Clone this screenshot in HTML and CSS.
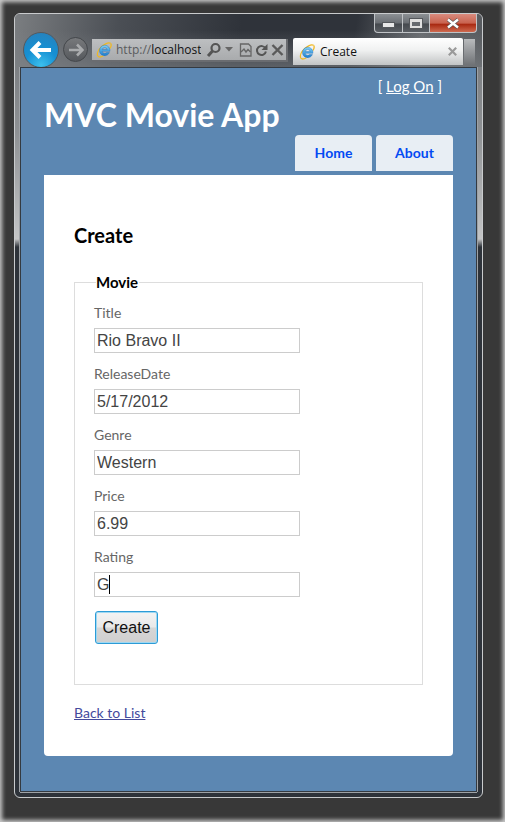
FILE: index.html
```html
<!DOCTYPE html>
<html lang="en">
<head>
<meta charset="utf-8">
<title>Create</title>
<link rel="stylesheet" href="styles.css">
</head>
<body>
<svg class="defs" width="0" height="0" aria-hidden="true">
  <defs>
    <linearGradient id="ieblue" x1="0" y1="0" x2="0" y2="1">
      <stop offset="0" stop-color="#7fd0f5"/>
      <stop offset="1" stop-color="#1c7fd0"/>
    </linearGradient>
    <symbol id="ie" viewBox="0 0 16 16">
      <path d="M14.6 1.3C12.8.2 9 1.8 5.6 4.8 2.6 7.500.6 11.500 1.800 14c1 1.500 3.600.9 5.600-.3" fill="none" stroke="#f0b820" stroke-width="1.300"/>
      <path d="M14.600 1.300c1 1.200.4 3.400-.6 5.200" fill="none" stroke="#f0b820" stroke-width="1.300"/>
      <path d="M8.700 3.200a5.200 5.200 0 0 0-5.200 5.200 5.200 5.200 0 0 0 9.900 2.200h-2.900a2.700 2.700 0 0 1-4.400-1.300h7.800A5.200 5.200 0 0 0 8.700 3.200Zm-2.500 4.300a2.600 2.600 0 0 1 5 0Z" fill="url(#ieblue)" stroke="#1668b8" stroke-width=".4"/>
    </symbol>
  </defs>
</svg>
<div class="desk">
  <div class="window">
    <div class="chrome">
      <div class="caption">
        <div class="cap cap-min"><span class="min-glyph"></span></div>
        <div class="cap cap-max"><span class="max-glyph"></span></div>
        <div class="cap cap-close">
          <svg width="14" height="11" viewBox="0 0 14 11"><path d="M2 1.500 12 9.500M12 1.500 2 9.500" stroke="#555" stroke-width="3.600"/><path d="M2 1.500 12 9.500M12 1.500 2 9.500" stroke="#fff" stroke-width="2.400"/></svg>
        </div>
      </div>
      <div class="toolbar">
        <div class="back">
          <svg width="24" height="20" viewBox="0 0 24 20"><path d="M11 2.500 3.500 10l7.500 7.500M4 10h18" fill="none" stroke="#fff" stroke-width="4"/></svg>
        </div>
        <div class="forward">
          <svg width="16" height="14" viewBox="0 0 16 14"><path d="M9 1.500 14.500 7 9 12.500M14 7H1" fill="none" stroke="#a9abad" stroke-width="2.600"/></svg>
        </div>
        <div class="address">
          <svg class="ie" width="16" height="16"><use href="#ie"/></svg>
          <span class="url"><span class="url-dim">http://</span>localhost:</span>
          <svg class="addr-ico" width="15" height="16" viewBox="0 0 15 16"><circle cx="9.500" cy="6" r="4" fill="none" stroke="#555" stroke-width="2.200"/><path d="M6.500 9 2 14" stroke="#555" stroke-width="3"/></svg>
          <svg class="addr-drop" width="8" height="5" viewBox="0 0 8 5"><path d="M0 0h8L4 4.500Z" fill="#666"/></svg>
          <svg class="addr-compat" width="13" height="14" viewBox="0 0 13 14"><path d="M1.500 1h8l2.500 2.500V13h-10.500Z" fill="none" stroke="#666" stroke-width="1.300"/><path d="M2 9l3-3 2 3 2-2.500L11.500 9" fill="none" stroke="#666" stroke-width="1.400"/></svg>
          <svg class="addr-refresh" width="13" height="14" viewBox="0 0 13 14"><path d="M10.500 5.500a4.500 4.500 0 1 0 .4 3" fill="none" stroke="#555" stroke-width="2"/><path d="M12.500 1v6h-6Z" fill="#555"/></svg>
          <svg class="addr-stop" width="13" height="12" viewBox="0 0 13 12"><path d="M1.500 1 11.500 11M11.500 1 1.500 11" stroke="#5a5a5a" stroke-width="2.400"/></svg>
        </div>
        <div class="tab">
          <svg class="ie" width="16" height="16"><use href="#ie"/></svg>
          <span class="tab-title">Create</span>
          <svg class="tab-close" width="9" height="9" viewBox="0 0 9 9"><path d="M.8.800 8.200 8.200M8.200.800.800 8.200" stroke="#9a9a9a" stroke-width="2.200"/></svg>
        </div>
        <div class="newtab"></div>
      </div>
    </div>

    <div class="page">
      <header class="site-head">
        <div class="logon">[ <a href="#">Log On</a> ]</div>
        <h1 class="site-title">MVC Movie App</h1>
        <nav class="menu">
          <a class="menu-item" href="#">Home</a>
          <a class="menu-item" href="#">About</a>
        </nav>
      </header>
      <main class="card">
        <h2 class="card-title">Create</h2>
        <fieldset class="form">
          <legend class="form-legend">Movie</legend>
          <div class="field">
            <label class="field-label" for="title">Title</label>
            <input class="field-input" id="title" type="text" value="Rio Bravo II">
          </div>
          <div class="field">
            <label class="field-label" for="date">ReleaseDate</label>
            <input class="field-input" id="date" type="text" value="5/17/2012">
          </div>
          <div class="field">
            <label class="field-label" for="genre">Genre</label>
            <input class="field-input" id="genre" type="text" value="Western">
          </div>
          <div class="field">
            <label class="field-label" for="price">Price</label>
            <input class="field-input" id="price" type="text" value="6.99">
          </div>
          <div class="field">
            <label class="field-label" for="rating">Rating</label>
            <div class="caret-wrap">
              <input class="field-input" id="rating" type="text" value="G">
              <span class="caret"></span>
            </div>
          </div>
          <button class="submit" type="button">Create</button>
        </fieldset>
        <a class="back-link" href="#">Back to List</a>
      </main>
    </div>
  </div>
</div>
</body>
</html>
```

FILE: styles.css
```css
* { box-sizing: border-box; }
html, body { margin: 0; padding: 0; }
body { width: 505px; height: 822px; overflow: hidden; background: #fff; }
.defs { position: absolute; }

.desk {
  width: 505px;
  height: 822px;
  padding: 13px 22px 24px 14px;
  background: #383838;
  box-shadow: inset 0 0 4px 2px rgba(255, 255, 255, .75);
}

.window {
  width: 469px;
  height: 785px;
  padding: 0 5px 5px;
  border: 1px solid #c9cbcd;
  border-radius: 6px;
  background: linear-gradient(180deg, #6e7175 0, #8f9295 120px, #c4c5c6 225px, #2e333a 233px, #2e333a 100%);
  display: flex;
  flex-direction: column;
}

.chrome {
  margin: 0 -5px;
  padding: 0 5px;
  height: 53px;
  border-radius: 5px 5px 0 0;
  background:
    linear-gradient(180deg, rgba(0, 0, 0, 0) 0, rgba(0, 0, 0, 0) 30%, rgba(130, 134, 138, .55) 100%),
    linear-gradient(100deg, #7b7e81 0, #4b4f55 22%, #2f333a 48%, #2f333a 72%, #6a6d71 86%, #55585c 100%);
}

.caption { height: 18px; display: flex; justify-content: flex-end; }
.cap {
  height: 19px;
  display: flex;
  align-items: center;
  justify-content: center;
  border: 1px solid #c0c3c6;
  border-top: 0;
  border-left-width: 0;
}
.cap-min {
  width: 29px;
  border-left-width: 1px;
  border-radius: 0 0 0 4px;
  background: linear-gradient(180deg, #8b8f93 0, #6b6f74 50%, #45494e 55%, #5a5e63 100%);
}
.cap-max {
  width: 27px;
  background: linear-gradient(180deg, #8b8f93 0, #6b6f74 50%, #45494e 55%, #5a5e63 100%);
}
.cap-close {
  width: 47px;
  border-radius: 0 0 4px 0;
  background: linear-gradient(180deg, #d98b7e 0, #c9634f 50%, #a92a12 58%, #cf6a50 100%);
}
.min-glyph { width: 11px; height: 4px; margin-top: 4px; background: #e8e8e8; box-shadow: 0 0 0 1px #55585c; }
.max-glyph { width: 12px; height: 9px; border: 2px solid #e0e0e0; border-top-width: 3px; background: #666a6f; box-shadow: 0 0 0 1px #55585c; }

.toolbar { height: 35px; padding-left: 3px; display: flex; align-items: flex-start; }

.back {
  width: 36px;
  height: 36px;
  flex: none;
  border-radius: 50%;
  border: 1px solid #55595e;
  display: flex;
  align-items: center;
  justify-content: center;
  background: radial-gradient(circle at 50% 95%, #3cc0ee 0, #1690d3 45%, #1a8ccd 60%, #2a7fb8 100%);
}
.forward {
  width: 25px;
  height: 25px;
  flex: none;
  margin: 5px 0 0 4px;
  border-radius: 50%;
  border: 1px solid #44474b;
  display: flex;
  align-items: center;
  justify-content: center;
  background: linear-gradient(180deg, #77797c 0, #55585c 100%);
}
.address {
  width: 196px;
  height: 23px;
  flex: none;
  margin: 7px 0 0 4px;
  padding-left: 4px;
  display: flex;
  align-items: center;
  background: linear-gradient(180deg, #bdbfc1 0, #a9abad 100%);
  border: 1px solid #6a6c70;
  border-width: 0 2px 2px 0;
  overflow: hidden;
}
.ie { flex: none; }
.url {
  width: 85px;
  margin-left: 4px;
  flex: none;
  overflow: hidden;
  white-space: nowrap;
  font: 12px/16px "Open Sans", sans-serif;
  color: #111;
}
.url-dim { color: #5a5c5e; }
.addr-ico { margin-left: 5px; flex: none; }
.addr-drop { margin-left: 4px; flex: none; }
.addr-compat { margin-left: 6px; flex: none; }
.addr-refresh { margin-left: 3px; flex: none; }
.addr-stop { margin-left: 3px; flex: none; }

.tab {
  width: 170px;
  height: 27px;
  flex: none;
  margin: 6px 0 0 5px;
  padding: 0 6px;
  display: flex;
  align-items: center;
  background: linear-gradient(180deg, #fff 0, #f0f1f1 45%, #c2c4c5 100%);
  border-radius: 2px 2px 0 0;
}
.tab-title {
  margin-left: 5px;
  font: 12px/16px "Open Sans", sans-serif;
  color: #111;
}
.tab-close { margin-left: auto; }
.newtab {
  width: 11px;
  height: 26px;
  flex: none;
  margin: 7px 0 0 1px;
  background: linear-gradient(180deg, #b9bbbd 0, #6f7276 100%);
}

.page {
  width: 457px;
  height: 725px;
  padding: 0 23px 0;
  background: #5c87b2;
  border: 1px solid #343a41;
  box-shadow: 0 1px 0 #9ea2a6, 1px 0 0 #9ea2a6, -1px 0 0 #9ea2a6;
  font-family: Lato, "Noto Sans", sans-serif;
}

.logon {
  margin-top: 8px;
  padding-right: 11px;
  text-align: right;
  font-size: 15px;
  line-height: 20px;
  color: #fff;
}
.logon a { color: #fff; text-decoration: underline; }

.site-title {
  margin: 0;
  font-size: 32px;
  line-height: 38px;
  font-weight: 700;
  color: #fff;
}

.menu { margin-top: 1px; display: flex; justify-content: flex-end; gap: 4px; }
.menu-item {
  width: 77px;
  height: 36px;
  border-radius: 4px 4px 0 0;
  background: #e8eef4;
  color: #034af3;
  font-size: 14px;
  font-weight: 700;
  line-height: 36px;
  text-align: center;
  text-decoration: none;
}

.card {
  margin-top: 4px;
  height: 581px;
  padding: 45px 30px 0;
  background: #fff;
  border-radius: 0 0 4px 4px;
}
.card-title {
  margin: 0;
  font-size: 20px;
  line-height: 30px;
  font-weight: 700;
  color: #000;
}

.form {
  margin: 22px 0 0;
  padding: 0 19px 40px;
  border: 1px solid #ddd;
  min-width: 0;
}
.form-legend {
  margin-left: 2px;
  padding: 0 1px 0 0;
  font-size: 15px;
  line-height: 20px;
  font-weight: 700;
  color: #000;
  margin-left: 2px;
}

.field { padding-top: 11px; }
.field-label {
  display: block;
  height: 20px;
  margin-bottom: 5px;
  font-size: 14px;
  line-height: 20px;
  color: #666;
}
.field-input {
  display: block;
  width: 206px;
  height: 25px;
  padding: 0 2px;
  border: 1px solid #ccc;
  background: #fff;
  font: 16px "Liberation Sans", Arial, sans-serif;
  color: #444;
  outline: none;
}
.caret-wrap { position: relative; }
.caret {
  position: absolute;
  left: 15px;
  top: 3px;
  width: 1px;
  height: 19px;
  background: #000;
}

.submit {
  display: block;
  width: 63px;
  height: 33px;
  margin: 14px 0 0 1px;
  padding: 0;
  border: 1px solid #2c9bd6;
  border-radius: 3px;
  box-shadow: inset 0 0 0 1px #9fd8f2;
  background: linear-gradient(180deg, #f3f3f3 0, #e9e9e9 48%, #d6d6d6 52%, #cfcfcf 100%);
  font: 16px "Liberation Sans", Arial, sans-serif;
  color: #111;
}

.back-link {
  display: block;
  margin-top: 18px;
  font-size: 14px;
  line-height: 20px;
  color: #444a9c;
  text-decoration: underline;
}
```
